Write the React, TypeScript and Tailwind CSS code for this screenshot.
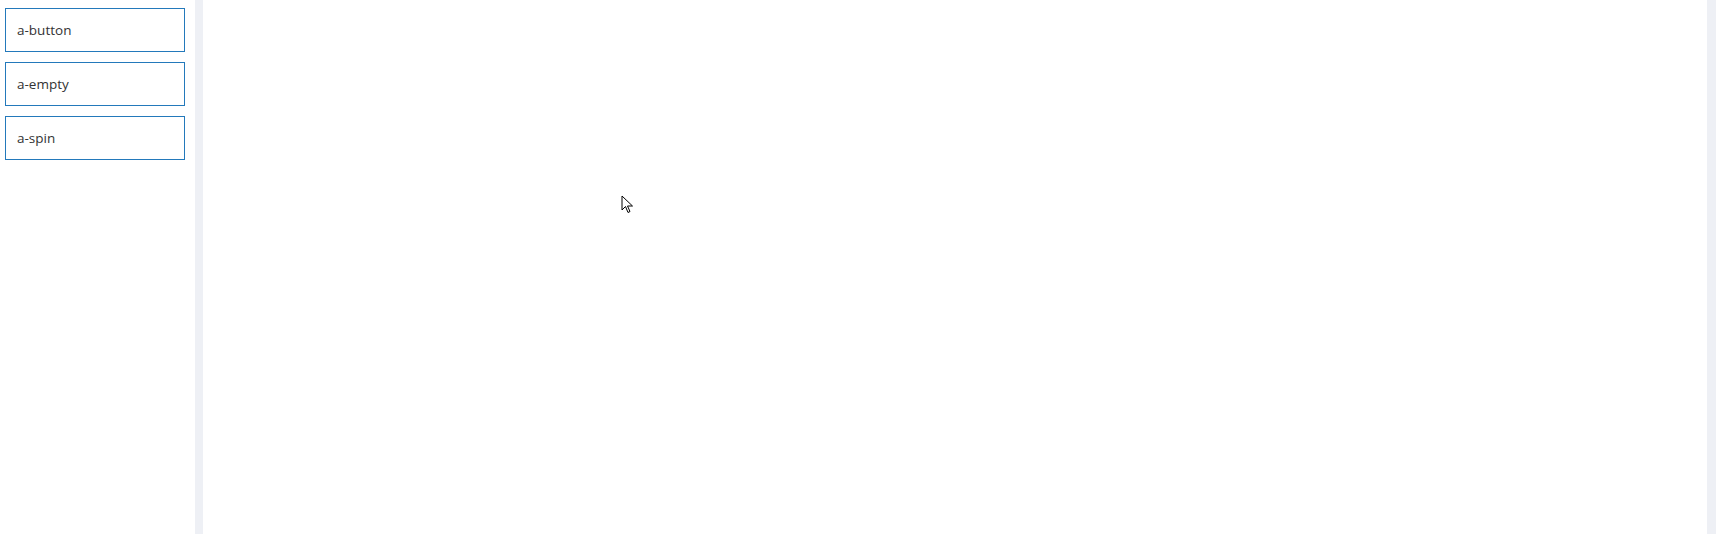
import React from 'react';

const items = ['a-button', 'a-empty', 'a-spin'];

const App: React.FC = () => {
  return (
    <div className="relative flex h-[534px] w-full bg-white" style={{ fontFamily: '"Open Sans", "Noto Sans", sans-serif' }}>
      <aside className="w-[195px] shrink-0 pl-[5px] pt-2 flex flex-col gap-[10px]">
        {items.map((name) => (
          <button
            key={name}
            className="w-[180px] h-[44px] border border-[#2379bb] bg-white text-left pl-[11px] text-[13.5px] text-[#333]"
          >
            {name}
          </button>
        ))}
      </aside>
      <div className="w-2 shrink-0 bg-[#eef0f5]" />
      <main className="flex-1 bg-white" />
      <div className="w-[9px] shrink-0 bg-[#eef0f5]" />
      <svg className="absolute left-[621px] top-[195px]" width="13" height="19" viewBox="0 0 13 19">
        <path d="M1 1 L1 15 L4.5 11.5 L7 17.5 L9 16.5 L6.5 11 L11.5 11 Z" fill="#fff" stroke="#000" strokeWidth="1" strokeLinejoin="miter" />
      </svg>
    </div>
  );
};

export default App;
